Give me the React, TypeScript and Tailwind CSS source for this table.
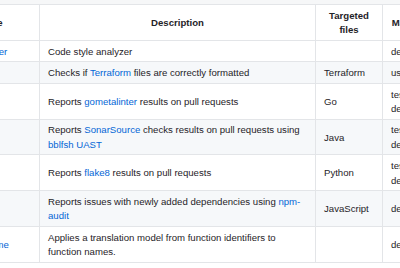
import React from 'react';

type Row = {
  name: string;
  description: React.ReactNode;
  files: string;
  maturity: string;
};

const Link: React.FC<{ children: React.ReactNode }> = ({ children }) => (
  <a href="#" className="text-[#0366d6] no-underline">
    {children}
  </a>
);

const rows: Row[] = [
  { name: 'style-analyzer', description: 'Code style analyzer', files: '', maturity: 'development' },
  {
    name: 'terraform',
    description: (
      <>
        Checks if <Link>Terraform</Link> files are correctly formatted
      </>
    ),
    files: 'Terraform',
    maturity: 'usable',
  },
  {
    name: 'gometalint',
    description: (
      <>
        Reports <Link>gometalinter</Link> results on pull requests
      </>
    ),
    files: 'Go',
    maturity: 'testing & development',
  },
  {
    name: 'sonarcheck',
    description: (
      <>
        Reports <Link>SonarSource</Link> checks results on pull requests using <Link>bblfsh UAST</Link>
      </>
    ),
    files: 'Java',
    maturity: 'testing & development',
  },
  {
    name: 'flake8',
    description: (
      <>
        Reports <Link>flake8</Link> results on pull requests
      </>
    ),
    files: 'Python',
    maturity: 'testing & development',
  },
  {
    name: 'npm-audit',
    description: (
      <>
        Reports issues with newly added dependencies using <Link>npm-audit</Link>
      </>
    ),
    files: 'JavaScript',
    maturity: 'development',
  },
  {
    name: 'function-name',
    description: 'Applies a translation model from function identifiers to function names.',
    files: '',
    maturity: 'development',
  },
];

const cell = 'border border-[#e3e5e8] px-[8px] pt-[3.9px] pb-[2.3px] align-middle';

export default function App() {
  return (
    <div className="w-[400px] h-[268px] overflow-hidden bg-white font-['Liberation_Sans',Arial,sans-serif] text-[9.6px] leading-[14.3px] text-[#1f2328]">
      {/* faint strip from the content above */}
      <div className="h-[4px] bg-[#f6f7f8]" />

      <table className="table-fixed border-collapse w-[523px] ml-[-61px]">
        <colgroup>
          <col className="w-[100px]" />
          <col className="w-[276px]" />
          <col className="w-[67px]" />
          <col className="w-[80px]" />
        </colgroup>
        <thead>
          <tr className="bg-white">
            <th className={`${cell} font-bold text-center`}>Name</th>
            <th className={`${cell} font-bold text-center`}>Description</th>
            <th className={`${cell} font-bold text-center`}>Targeted files</th>
            <th className={`${cell} font-bold text-center`}>Maturity level</th>
          </tr>
        </thead>
        <tbody>
          {rows.map((r, i) => (
            <tr key={r.name} className={i % 2 === 1 ? 'bg-[#f6f8fa]' : 'bg-white'}>
              <td className={cell}>
                <Link>{r.name}</Link>
              </td>
              <td className={cell}>{r.description}</td>
              <td className={cell}>{r.files}</td>
              <td className={cell}>{r.maturity}</td>
            </tr>
          ))}
        </tbody>
      </table>
    </div>
  );
}
